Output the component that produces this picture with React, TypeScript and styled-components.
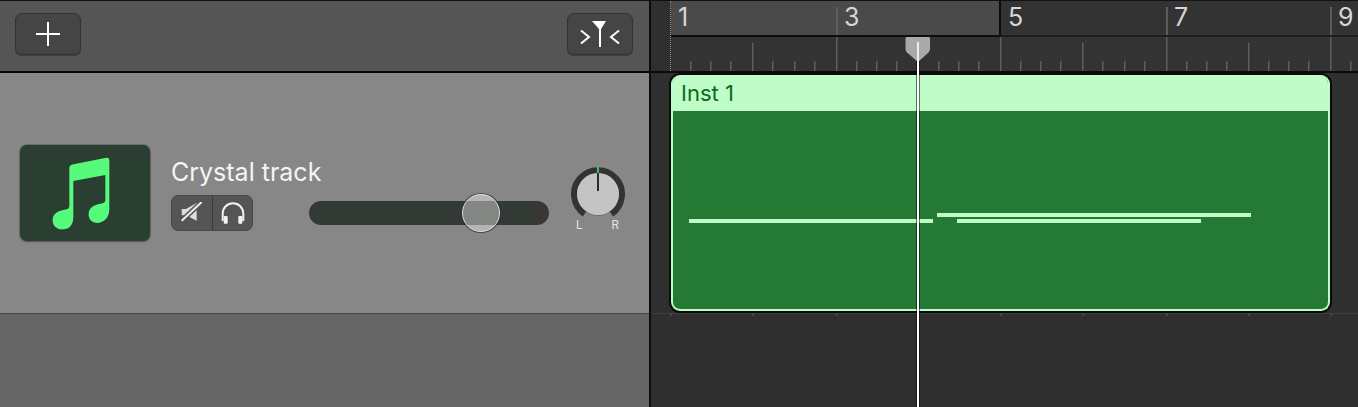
import React, {ReactElement} from 'react';
import styled, {createGlobalStyle} from 'styled-components';

const font = `Inter, "Liberation Sans", sans-serif`;
const green = '#c0fcc8';

const Global = createGlobalStyle`
  html, body {
    margin: 0;
    height: 100%;
    background: #2f2f2f;
    overflow: hidden;
  }
`;

const Page = styled.div`
  display: grid;
  grid-template-columns: 649px 2px 1fr;
  width: 1358px;
  height: 407px;
  overflow: hidden;
  font-family: ${font};
`;

const Divider = styled.div`
  background: #0c0c0c;
`;

const Side = styled.div`
  display: flex;
  flex-direction: column;
`;

const Header = styled.div`
  display: flex;
  justify-content: space-between;
  align-items: center;
  box-sizing: border-box;
  height: 73px;
  padding: 0 16px 4px 15px;
  background: #555;
  border-top: 1px solid #111;
  border-bottom: 2px solid #050505;
`;

const HeaderButton = styled.div`
  display: flex;
  justify-content: center;
  align-items: center;
  box-sizing: border-box;
  width: 66px;
  height: 42px;
  background: #454545;
  border: 1px solid #333;
  border-radius: 7px;
  box-shadow: 0 1px 1px rgba(0, 0, 0, 0.3);
`;

const TrackRow = styled.div`
  display: flex;
  align-items: center;
  box-sizing: border-box;
  height: 241px;
  padding: 0 0 0 20px;
  background: #878787;
  border-bottom: 1px solid #464646;
`;

const Tile = styled.div`
  display: flex;
  flex: none;
  width: 130px;
  height: 96px;
  background: #2a3e31;
  border-radius: 7px;
  box-shadow: 0 0 0 1px rgba(50, 50, 50, 0.3), 0 1px 2px rgba(0, 0, 0, 0.25);
`;

const TrackInfo = styled.div`
  display: flex;
  flex-direction: column;
  flex: none;
  width: 138px;
  margin-left: 21px;
`;

const TrackName = styled.div`
  height: 40px;
  font-size: 25px;
  line-height: 34px;
  color: #f4f4f4;
  white-space: nowrap;
`;

const ToggleGroup = styled.div`
  display: flex;
  box-sizing: border-box;
  width: 82px;
  height: 36px;
  background: #555;
  border: 1px solid #484848;
  border-radius: 7px;
  overflow: hidden;
`;

const Toggle = styled.div<{wide?: boolean}>`
  display: flex;
  justify-content: center;
  align-items: center;
  flex: ${({wide}) => wide ? '1' : 'none'};
  width: ${({wide}) => wide ? 'auto' : '40px'};
  border-right: ${({wide}) => wide ? '0' : '1px solid #3c3c3c'};
`;

const SliderTrack = styled.div`
  position: relative;
  flex: none;
  width: 240px;
  height: 24px;
  margin-top: 40px;
  background: linear-gradient(90deg, #333a36 95%, #3c3632 96%);
  border-radius: 12px;
`;

const SliderThumb = styled.div`
  position: absolute;
  top: -7px;
  box-sizing: border-box;
  width: 38px;
  height: 38px;
  background: rgba(246, 246, 246, 0.41);
  border: 1.5px solid #ddd;
  border-radius: 50%;
  box-shadow: 0 0 0 1px rgba(50, 50, 50, 0.75);
`;

const Pan = styled.div`
  position: relative;
  flex: none;
  width: 54px;
  height: 70px;
  margin: 18px 0 0 22px;
`;

const PanLabels = styled.div`
  display: flex;
  justify-content: space-between;
  padding: 0 6px 0 5px;
  margin-top: -2px;
  font-size: 11.5px;
  line-height: 12px;
  color: #e6e6e6;
`;

const EmptySide = styled.div`
  flex: 1;
  background: #656565;
`;

const Timeline = styled.div`
  position: relative;
  display: flex;
  flex-direction: column;
  background: #2f2f2f;
`;

const Ruler = styled.div`
  display: flex;
  height: 71px;
  padding-left: 19px;
  box-sizing: border-box;
  border-top: 1px solid #111;
`;

const StartMark = styled.div`
  flex: none;
  width: 0;
  border-left: 1px dotted #8a8a8a;
`;

const RulerBody = styled.div`
  flex: 1;
  display: flex;
  flex-direction: column;
  background: #333;
`;

const Bars = styled.div`
  display: flex;
  box-sizing: border-box;
  height: 36px;
  border-bottom: 2px solid #1d1d1d;
`;

const Cycle = styled.div`
  display: flex;
  flex: none;
  box-sizing: border-box;
  width: 330px;
  height: 36px;
  background: #4a4a4a;
  border-right: 2px solid #0c0c0c;
  border-bottom: 2px solid #0c0c0c;
`;

const Bar = styled.div<{width: number; tick?: boolean}>`
  flex: none;
  box-sizing: border-box;
  width: ${({width}) => width}px;
  margin-top: 6px;
  padding-left: ${({tick}) => tick ? 6 : 7}px;
  border-left: ${({tick}) => tick ? '2px solid #5c5c5c' : '0'};
  font-size: 25px;
  line-height: 20px;
  color: #d6d6d6;
`;

const Ticks = styled.svg`
  display: block;
  flex: none;
`;

const RulerEnd = styled.div`
  position: absolute;
  right: -3px;
  top: 30px;
  box-sizing: border-box;
  width: 5px;
  height: 23px;
  border: 1px solid #1d1d1d;
  border-radius: 0 0 0 4px;
`;

const Lane = styled.div`
  position: relative;
  display: flex;
  box-sizing: border-box;
  height: 243px;
  padding: 2px 0 2px 20px;
  border-top: 2px solid #0a0a0a;
  border-bottom: 1px solid #3d3d3d;
`;

const Region = styled.div`
  position: relative;
  display: flex;
  flex-direction: column;
  box-sizing: border-box;
  width: 659px;
  background: #247a35;
  border: solid ${green};
  border-width: 0 2px 2px;
  border-radius: 9px;
  box-shadow: 0 0 0 2px #0a0a0a;
  overflow: hidden;
`;

const RegionName = styled.div`
  flex: none;
  height: 36px;
  margin: 0 -2px;
  padding-left: 10px;
  background: ${green};
  font-size: 22px;
  line-height: 37px;
  color: #0c6a1e;
`;

const Note = styled.div<{left: number; top: number; width: number}>`
  position: absolute;
  left: ${({left}) => left}px;
  top: ${({top}) => top}px;
  width: ${({width}) => width}px;
  height: 4px;
  background: ${green};
`;

const PlayLine = styled.div`
  position: absolute;
  left: 266px;
  top: 42px;
  bottom: 0;
  width: 2px;
  background: #fff;
  box-shadow: 0 0 0 1px rgba(0, 0, 0, 0.55);
`;

const PlayHead = styled.svg`
  position: absolute;
  left: 254px;
  top: 37px;
`;

const GridMarks = styled.svg`
  position: absolute;
  left: 19px;
  bottom: -3px;
`;

const TICKS = [
  {x: 19, y: 24}, {x: 39, y: 24}, {x: 59, y: 24}, {x: 81, y: 6},
  {x: 101, y: 24}, {x: 123, y: 24}, {x: 143, y: 24}, {x: 165, y: 0},
  {x: 185, y: 24}, {x: 205, y: 24}, {x: 225, y: 24}, {x: 247, y: 6},
  {x: 267, y: 24}, {x: 287, y: 24}, {x: 307, y: 24}, {x: 329, y: 0},
  {x: 349, y: 24}, {x: 369, y: 24}, {x: 389, y: 24}, {x: 411, y: 6},
  {x: 431, y: 24}, {x: 453, y: 24}, {x: 473, y: 24}, {x: 495, y: 0},
  {x: 515, y: 24}, {x: 535, y: 24}, {x: 555, y: 24}, {x: 577, y: 6},
  {x: 597, y: 24}, {x: 617, y: 24}, {x: 637, y: 24}, {x: 659, y: 0},
  {x: 679, y: 24},
];

const GRID_MARKS = [0, 82, 166, 248, 330, 412, 496, 578, 660];

const NOTES = [
  {left: 16, top: 144, width: 244},
  {left: 264, top: 138, width: 314},
  {left: 284, top: 144, width: 244},
];

export default function App(): ReactElement {
  return (
    <Page>
      <Global />
      <Side>
        <Header>
          <HeaderButton>
            <svg width="26" height="26" viewBox="0 0 26 26">
              <path d="M1 13H25M13 1V25" stroke="#fff" strokeWidth="2" />
            </svg>
          </HeaderButton>
          <HeaderButton>
            <svg width="42" height="28" viewBox="0 0 42 28" fill="none">
              <path d="M13 1H27L22 9V27H20V9Z" fill="#fff" />
              <path d="M2 10.5L10 17L2 23.5M40 10.5L32 17L40 23.5" stroke="#fff" strokeWidth="2" />
            </svg>
          </HeaderButton>
        </Header>
        <TrackRow>
          <Tile>
            <svg width="130" height="96" viewBox="0.67 0 130 96">
              <path
                d="M50 23Q50 20 53 19.5L87 12.8Q90 12.3 90 15L90 64C90 72 86 76 80 77.7C74 79 69 75 69.3 69C69.5 63 74 60 80 59C83 58.4 86 58 86 55L86 30L54 36L54 72C54 80 50 84 44 84.3C38 85 33 81 33.3 75C33.5 69 38 66 44 65C47 64.4 50 64 50 61Z"
                fill="#57fb7c"
              />
            </svg>
          </Tile>
          <TrackInfo>
            <TrackName>Crystal track</TrackName>
            <ToggleGroup>
              <Toggle>
                <svg width="22" height="22" viewBox="181 204 22 22" fill="none">
                  <path d="M181.7 211H186L196.7 205V222.7L186 217.3H181.7Z" fill="#ddd" />
                  <path d="M181.7 222.7L201.7 204" stroke="#555" strokeWidth="5" />
                  <path d="M181.7 222.7L201.7 204" stroke="#eee" strokeWidth="2" />
                </svg>
              </Toggle>
              <Toggle wide>
                <svg width="24" height="23" viewBox="220 201 24 23" fill="none">
                  <path d="M221.7 220V212.5A10.3 10.3 0 0 1 242.3 212.5V220" stroke="#f2f2f2" strokeWidth="2" />
                  <rect x="222.7" y="215" width="4" height="7.7" rx="1" fill="#f2f2f2" />
                  <rect x="237.3" y="215" width="4" height="7.7" rx="1" fill="#f2f2f2" />
                </svg>
              </Toggle>
            </ToggleGroup>
          </TrackInfo>
          <SliderTrack>
            <SliderThumb style={{left: 153}} />
          </SliderTrack>
          <Pan>
            <svg width="54" height="54" viewBox="0 0 54 54" fill="none" display="block">
              <path d="M13.5 47A24 24 0 1 1 40.5 47" stroke="#333" strokeWidth="6" />
              <circle cx="27" cy="28" r="21" fill="#000" opacity="0.15" />
              <circle cx="27" cy="27" r="21" fill="#c4c4c4" />
              <path d="M27 6V24" stroke="#2b2b2b" strokeWidth="2" />
              <path d="M27 0V6" stroke="#3ec45c" strokeWidth="2" />
            </svg>
            <PanLabels>
              <span>L</span>
              <span>R</span>
            </PanLabels>
          </Pan>
        </TrackRow>
        <EmptySide />
      </Side>
      <Divider />
      <Timeline>
        <Ruler>
          <StartMark />
          <RulerBody>
            <Bars>
              <Cycle>
                <Bar width={165}>1</Bar>
                <Bar width={163} tick>3</Bar>
              </Cycle>
              <Bar width={165}>5</Bar>
              <Bar width={164} tick>7</Bar>
              <Bar width={40} tick>9</Bar>
            </Bars>
            <Ticks width="688" height="34" viewBox="0 0 688 34">
              {TICKS.map(({x, y}) => (
                <rect key={x} x={x} y={y} width="1.5" height={34 - y} fill="#5e5e5e" />
              ))}
            </Ticks>
          </RulerBody>
        </Ruler>
        <RulerEnd />
        <Lane>
          <Region>
            <RegionName>Inst 1</RegionName>
            {NOTES.map((note) => <Note key={note.left} {...note} />)}
          </Region>
          <GridMarks width="680" height="3" viewBox="0 0 680 3">
            {GRID_MARKS.map((x) => (
              <rect key={x} x={x} y="0" width="2" height="3" fill="#444" />
            ))}
          </GridMarks>
        </Lane>
        <PlayLine />
        <PlayHead width="26" height="25" viewBox="0 0 26 25">
          <path d="M0.5 2Q0.5 0 2 0H24Q25 0 25 2V12Q25 14 23.5 15.5L13 25L2 15.5Q0.5 14 0.5 12Z" fill="#aaa" />
          <rect x="12" y="5" width="2" height="20" fill="#eee" />
        </PlayHead>
      </Timeline>
    </Page>
  );
}
